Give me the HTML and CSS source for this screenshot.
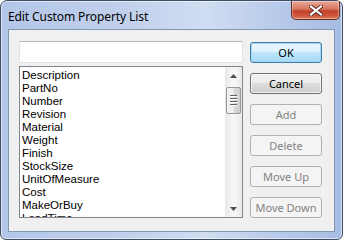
FILE: index.html
```html
<!DOCTYPE html>
<html>
<head>
<meta charset="utf-8">
<link rel="stylesheet" href="styles.css">
</head>
<body>
<div class="window">
  <div class="titlebar">
    <span class="title">Edit Custom Property List</span>
    <div class="close">
      <svg width="14" height="11" viewBox="0 0 14 11">
        <path d="M2 1.5 L12 9.5 M12 1.5 L2 9.5" stroke="#5a2a24" stroke-width="4" stroke-linecap="square"/>
        <path d="M2 1.5 L12 9.5 M12 1.5 L2 9.5" stroke="#ffffff" stroke-width="2.2" stroke-linecap="square"/>
      </svg>
    </div>
  </div>
  <div class="client">
    <div class="leftcol">
      <div class="textbox"></div>
      <div class="listbox">
        <div class="items">
          <div class="item">Description</div>
          <div class="item">PartNo</div>
          <div class="item">Number</div>
          <div class="item">Revision</div>
          <div class="item">Material</div>
          <div class="item">Weight</div>
          <div class="item">Finish</div>
          <div class="item">StockSize</div>
          <div class="item">UnitOfMeasure</div>
          <div class="item">Cost</div>
          <div class="item">MakeOrBuy</div>
          <div class="item">LeadTime</div>
        </div>
        <div class="scrollbar">
          <div class="arrow">
            <svg width="7" height="4" viewBox="0 0 7 4"><path d="M0 4 L3.5 0 L7 4 Z" fill="#4d4d4d"/></svg>
          </div>
          <div class="track">
            <div class="thumb">
              <div class="grip"></div>
              <div class="grip"></div>
              <div class="grip"></div>
              <div class="grip"></div>
            </div>
          </div>
          <div class="arrow">
            <svg width="7" height="4" viewBox="0 0 7 4"><path d="M0 0 L7 0 L3.5 4 Z" fill="#4d4d4d"/></svg>
          </div>
        </div>
      </div>
    </div>
    <div class="buttons">
      <div class="btn default">OK</div>
      <div class="btn">Cancel</div>
      <div class="btn disabled">Add</div>
      <div class="btn disabled">Delete</div>
      <div class="btn disabled">Move Up</div>
      <div class="btn disabled">Move Down</div>
    </div>
  </div>
</div>
</body>
</html>
```
FILE: styles.css
```css
html, body {
  margin: 0;
  padding: 0;
  background: #ffffff;
}
.window {
  box-sizing: border-box;
  width: 343px;
  height: 240px;
  border: 1px solid #3f4e63;
  border-radius: 7px 7px 6px 6px;
  background: linear-gradient(to right, #b4c6e8 0%, #c0d0ec 35%, #d0ddf2 60%, #b9cbea 80%, #a7bce2 100%);
  box-shadow: inset 0 0 0 1px rgba(255,255,255,0.55);
  padding: 0 7px 7px 7px;
  display: flex;
  flex-direction: column;
  font-family: "Noto Sans", "Open Sans", sans-serif;
}
.titlebar {
  height: 28px;
  display: flex;
  align-items: flex-start;
  justify-content: space-between;
}
.title {
  font-size: 12px;
  color: #000000;
  margin-top: 7px;
  letter-spacing: -0.1px;
}
.close {
  width: 49px;
  height: 19px;
  margin-right: -5px;
  box-sizing: border-box;
  border: 1px solid #6b2b22;
  border-top: none;
  border-radius: 0 0 5px 5px;
  background: linear-gradient(to bottom, #e9a99b 0%, #d6765f 45%, #c2412a 55%, #cf5a3d 85%, #e0876a 100%);
  box-shadow: inset 0 0 0 1px rgba(255,255,255,0.35);
  display: flex;
  align-items: center;
  justify-content: center;
}
.client {
  flex: 1;
  background: #f0f0f0;
  border: 1px solid #8496b2;
  display: flex;
  gap: 7px;
  padding-left: 10px;
}
.leftcol {
  width: 224px;
  padding-top: 11px;
  display: flex;
  flex-direction: column;
  gap: 3px;
}
.textbox {
  height: 22px;
  box-sizing: border-box;
  background: #ffffff;
  border: 1px solid #dfe3ea;
  border-top-color: #b5b9c2;
}
.listbox {
  height: 152px;
  box-sizing: border-box;
  background: #ffffff;
  border: 1px solid #82878f;
  display: flex;
  overflow: hidden;
}
.items {
  flex: 1;
  padding: 2px 0 0 2px;
  font-family: "Liberation Sans", Arial, sans-serif;
  font-size: 11.5px;
  color: #000000;
  overflow: hidden;
}
.item {
  height: 13px;
  line-height: 13px;
  white-space: nowrap;
}
.scrollbar {
  width: 17px;
  display: flex;
  flex-direction: column;
  background: linear-gradient(to right, #e8e8e8, #f6f6f6 40%, #f6f6f6 60%, #e8e8e8);
}
.arrow {
  height: 17px;
  display: flex;
  align-items: center;
  justify-content: center;
}
.track {
  flex: 1;
  padding: 3px 1px 0 1px;
}
.thumb {
  height: 27px;
  box-sizing: border-box;
  border: 1px solid #979797;
  border-radius: 2px;
  background: linear-gradient(to right, #f2f2f2 0%, #ececec 50%, #d9d9d9 51%, #cfcfcf 100%);
  display: flex;
  flex-direction: column;
  align-items: center;
  justify-content: center;
  gap: 1px;
}
.grip {
  width: 7px;
  height: 1px;
  background: #5f5f5f;
  border-bottom: 1px solid #ffffff;
}
.buttons {
  width: 72px;
  padding-top: 12px;
  display: flex;
  flex-direction: column;
  gap: 10px;
}
.btn {
  height: 21px;
  box-sizing: border-box;
  border: 1px solid #707070;
  border-radius: 3px;
  background: linear-gradient(to bottom, #f2f2f2 0%, #ebebeb 49%, #dddddd 50%, #cfcfcf 100%);
  box-shadow: inset 0 0 0 1px rgba(255,255,255,0.7);
  font-size: 11px;
  color: #000000;
  display: flex;
  align-items: center;
  justify-content: center;
}
.btn.default {
  border-color: #3c7fb1;
  background: linear-gradient(to bottom, #eaf6fd 0%, #d9f0fc 49%, #bee6fd 50%, #a7d9f5 100%);
  box-shadow: inset 0 0 0 1px #a6d4ee;
}
.btn.disabled {
  border-color: #adb2b5;
  background: #f4f4f4;
  box-shadow: none;
  color: #838383;
}
```
